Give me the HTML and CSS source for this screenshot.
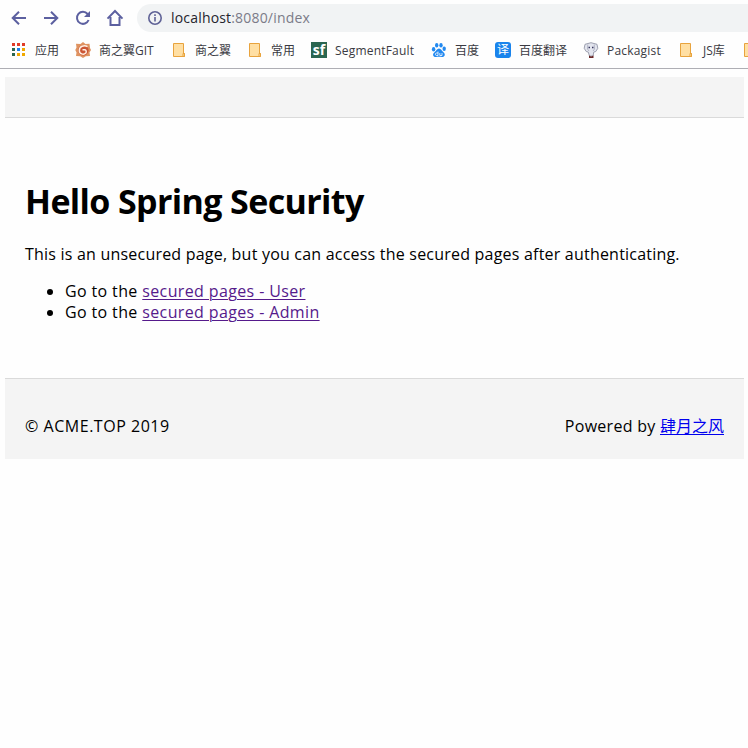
FILE: index.html
```html
<!DOCTYPE html>
<html lang="zh">
<head>
<meta charset="utf-8">
<title>Hello Spring Security</title>
<link rel="stylesheet" href="styles.css">
</head>
<body>
<svg class="defs" width="0" height="0">
  <symbol id="folder" viewBox="0 0 16 16"><path d="M1.500 1.500h10v10h1v3h-11z" fill="#ffdfa3" stroke="#e8a33d"/><path d="M11 11.500h1.500v3H11z" fill="#ffdfa3" stroke="#e8a33d"/></symbol>
</svg>
<div class="browser">
  <div class="toolbar">
    <svg class="nav" viewBox="0 0 18 18"><path d="M16 9H3M9 2.700L2.700 9 9 15.300"/></svg>
    <svg class="nav" viewBox="0 0 18 18"><path d="M2 9h13M9 2.700L15.300 9 9 15.300"/></svg>
    <svg class="nav" viewBox="0 0 18 18"><path d="M14.600 11A6 6 0 1 1 13.600 5L15 6.500"/><path class="solid" d="M16 2v6h-6z"/></svg>
    <svg class="nav" viewBox="0 0 18 18"><path d="M1.500 9.600L9 2l7.500 7.600M4.500 8v8h9V8"/></svg>
    <div class="address">
      <svg class="info" viewBox="0 0 16 16"><circle cx="8" cy="8" r="6.200"/><path d="M8 7v4.500M8 4.300v1.700"/></svg>
      <span class="url">localhost<span class="path">:8080/index</span></span>
    </div>
  </div>
  <div class="bookmarks">
    <div class="mark"><svg viewBox="0 0 16 16"><path fill="#e03c28" d="M1 1h3v3H1zM6 1h3v3H6zM11 1h3v3h-3z"/><path fill="#2b6650" d="M1 6h3v3H1zM1 11h3v3H1z"/><path fill="#1a80ec" d="M6 6h3v3H6z"/><path fill="#f0a800" d="M11 6h3v3h-3zM6 11h3v3H6zM11 11h3v3h-3z"/></svg><span>应用</span></div>
    <div class="mark"><svg viewBox="0 0 16 16"><path fill="#df9360" d="M8 0l2.500 2 4-.3.500 4.300L16 8l-1.500 2.500.5 3.500-4.200.3L8 16l-2.800-1.700L1 14l.5-3.500L.3 8 1.500 5.500 1 1.700l4.500.3z"/><circle cx="8.300" cy="8.200" r="5.300" fill="#cb5534"/><path d="M12.500 4.600C9 2.700 4.300 4.400 4.300 8.400c0 3.400 4.200 5 6.500 2.600.8-1.200.5-2.700-.8-3.200H7.500" fill="none" stroke="#fff1e4" stroke-width="1.500"/></svg><span>商之翼GIT</span></div>
    <div class="mark"><svg><use href="#folder"/></svg><span>商之翼</span></div>
    <div class="mark"><svg><use href="#folder"/></svg><span>常用</span></div>
    <div class="mark"><b class="sf">sf</b><span class="latin">SegmentFault</span></div>
    <div class="mark"><svg viewBox="0 0 16 16" fill="#2289f0"><ellipse cx="2.600" cy="7.300" rx="1.700" ry="2.200"/><ellipse cx="5.700" cy="3.200" rx="1.700" ry="2.300"/><ellipse cx="10" cy="3.200" rx="1.700" ry="2.300"/><ellipse cx="13.200" cy="6.800" rx="1.700" ry="2.200"/><path d="M8 6.500c2 0 2.500 2.300 4.500 3.700 2.500 2.300 1 5-1.500 4.800-2-.3-4-.3-6 0-3 .2-4-3-1.500-4.800C5.500 8.800 6 6.500 8 6.500z"/><path d="M7 9.500v4H5.500c-1.500 0-1.500-2.500 0-2.500H7M8.800 11v2.500h2.200V11" fill="none" stroke="#fff" stroke-width=".8"/></svg><span>百度</span></div>
    <div class="mark"><span class="translate">译</span><span>百度翻译</span></div>
    <div class="mark"><svg viewBox="0 0 16 16"><path d="M5 1.500L8 .7l3 .8 3 .8.800 4-2 3.200-2 .5-.8 4H6.500L5.200 10l-2-.5-2-3.200L2 2.300z" fill="#e3e5ee" stroke="#9497a8" stroke-width=".9"/><path d="M4.800 2.500L4.500 7l1.500 2M11.200 2.500l.3 4.500L10 9" fill="none" stroke="#a6a9bb" stroke-width=".8"/><path d="M5.500 5.500H7M9 5.500h1.500" stroke="#34345c" stroke-width="1.500"/><path d="M6 13.500l2 1 2.500-1V16H6z" fill="#6b2929"/></svg><span class="latin">Packagist</span></div>
    <div class="mark"><svg><use href="#folder"/></svg><span>JS库</span></div>
    <div class="mark"><svg><use href="#folder"/></svg></div>
  </div>
</div>
<div class="page">
  <header class="topbar"></header>
  <main>
    <h1>Hello Spring Security</h1>
    <p>This is an unsecured page, but you can access the secured pages after authenticating.</p>
    <ul>
      <li>Go to the <a class="visited" href="#user">secured pages - User</a></li>
      <li>Go to the <a class="visited" href="#admin">secured pages - Admin</a></li>
    </ul>
  </main>
  <footer><span class="copyright">© ACME.TOP 2019</span><span><span class="powered">Powered by </span><a href="#author">肆月之风</a></span></footer>
</div>
</body>
</html>
```
FILE: styles.css
```css
* { box-sizing: border-box; }
body {
  margin: 0;
  height: 748px;
  overflow: hidden;
  background: #fefefe;
  color: #000;
  font: 16px/21px "Open Sans", "Noto Sans CJK SC", sans-serif;
}
.defs { display: block; }
.browser { height: 69px; border-bottom: 1px solid #aeaeb4; overflow: hidden; }
.toolbar { display: flex; align-items: center; height: 28px; margin-top: 4px; padding-left: 10px; }
.nav { width: 18px; height: 18px; margin-right: 14px; flex: none; fill: none; stroke: #5c60a0; stroke-width: 2; }
.nav .solid { fill: #5c60a0; stroke: none; }
.address { flex: 1; display: flex; align-items: center; height: 28px; margin-left: -1px; padding-left: 10px; border-radius: 14px 0 0 14px; background: #f1f3f4; }
.info { width: 16px; height: 16px; fill: none; stroke: #5f6296; stroke-width: 1.6; }
.url { margin-left: 8px; font-size: 14px; line-height: 28px; letter-spacing: 0.18px; color: #24242c; }
.path { color: #7b7b88; }
.bookmarks { display: grid; grid-template-columns: 64px 97px 76px 63px 120px 64px 88px 96px 64px 24px; height: 36px; padding-left: 11px; font-size: 12px; color: #3a3a42; white-space: nowrap; }
.mark { display: flex; align-items: center; gap: 8px; }
.mark svg, .sf, .translate { width: 16px; height: 16px; flex: none; }
.mark:nth-child(3) svg, .mark:nth-child(4) svg { margin-right: -1px; }
.latin { letter-spacing: 0.2px; }
.sf { background: #2b6650; color: #fff; font-size: 14px; line-height: 15px; text-align: center; }
.translate { border-radius: 3px; background: #1a84ec; color: #fff; font-size: 12px; line-height: 16px; text-align: center; }
.page { margin: 8px 4px 0 5px; }
.topbar { height: 41px; background: #f4f4f4; border-bottom: 1px solid #dadada; }
main { height: 260px; padding: 60px 20px 0; }
h1 { margin: 0; font-size: 34px; line-height: 46px; font-weight: 700; letter-spacing: -0.62px; }
p { margin: 20px 0 16px; white-space: nowrap; letter-spacing: 0.21px; }
ul { margin: 0; padding-left: 40px; letter-spacing: 0.37px; }
a { color: #0000ee; text-decoration-thickness: 1px; text-underline-offset: 2px; }
a.visited { color: #551a8b; }
footer { display: flex; justify-content: space-between; height: 81px; padding: 37px 20px 0; border-top: 1px solid #dadada; background: #f4f4f4; }
.copyright { letter-spacing: 0.53px; }
.powered { letter-spacing: 0.28px; }
```
